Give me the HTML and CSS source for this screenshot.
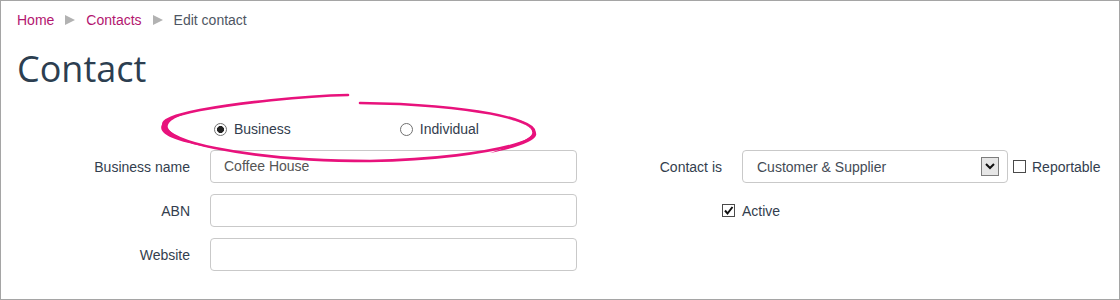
FILE: index.html
```html
<!DOCTYPE html>
<html lang="en">
<head>
<meta charset="utf-8">
<title>Edit contact</title>
<link rel="stylesheet" href="styles.css">
</head>
<body>
<div class="page">
  <nav class="crumbs">
    <a href="#" class="crumb-link">Home</a>
    <svg class="crumb-sep" width="10" height="10" viewBox="0 0 10 10"><path d="M0 0 L10 5 L0 10 Z"/></svg>
    <a href="#" class="crumb-link">Contacts</a>
    <svg class="crumb-sep" width="10" height="10" viewBox="0 0 10 10"><path d="M0 0 L10 5 L0 10 Z"/></svg>
    <span class="crumb-current">Edit contact</span>
  </nav>

  <h1 class="title">Contact</h1>

  <form class="form">
    <div class="radios">
      <label class="radio-opt"><input type="radio" name="kind" class="radio" checked> Business</label>
      <label class="radio-opt"><input type="radio" name="kind" class="radio"> Individual</label>
    </div>

    <label class="field-label">Business name</label>
    <div class="input">Coffee House</div>
    <label class="field-label">Contact is</label>
    <div class="select-wrap">
      <div class="select">
        <span class="select-text">Customer &amp; Supplier</span>
        <span class="select-btn">
          <svg width="10" height="7" viewBox="0 0 10 7"><path d="M1 1 L5 5 L9 1" fill="none" stroke="#111" stroke-width="2"/></svg>
        </span>
      </div>
      <label class="check-opt"><span class="check"></span>Reportable</label>
    </div>

    <label class="field-label">ABN</label>
    <div class="input"></div>
    <label class="check-opt active-opt"><span class="check">
      <svg width="11" height="11" viewBox="0 0 11 11"><path d="M2 5.5 L4.5 8.5 L9.5 2" fill="none" stroke="#111" stroke-width="2"/></svg>
    </span>Active</label>

    <label class="field-label">Website</label>
    <div class="input"></div>
  </form>

  <svg class="annotation" width="1120" height="300" viewBox="0 0 1120 300">
    <path class="ring" d="M 348 95 C 300 96, 240 103, 200 110 C 175 115, 160 120, 164 126 C 168 134, 185 142, 215 148 C 260 157, 320 161, 370 161 C 430 160, 490 153, 520 143 C 540 136, 538 128, 522 122 C 500 113, 450 107, 400 104 L 360 103"/>
    <path class="ring-fill" d="M 200 110 C 168 115, 155 124, 164 133 C 172 140, 192 144, 212 148 C 190 142, 172 136, 168 128 C 166 121, 178 115, 200 110 Z"/>
    <path class="ring-fill" d="M 505 118 C 535 126, 545 134, 528 142 C 518 147, 505 150, 490 153 C 510 146, 530 140, 532 134 C 534 128, 525 123, 505 118 Z"/>
  </svg>
</div>
</body>
</html>
```

FILE: styles.css
```css
html, body {
  margin: 0;
  padding: 0;
  background: #ffffff;
}

body {
  font-family: "Liberation Sans", Arial, sans-serif;
  font-size: 14px;
  color: #333e4e;
}

.page {
  position: relative;
  box-sizing: border-box;
  width: 1120px;
  height: 300px;
  border: 1px solid #a5a5a5;
  padding: 9px 16px 0 16px;
  overflow: hidden;
}

.crumbs {
  display: flex;
  align-items: center;
  height: 20px;
  line-height: 20px;
}

.crumb-link {
  color: #b3166f;
  text-decoration: none;
}

.crumb-sep {
  fill: #b2b2b2;
  margin: 0 11px;
}

.crumb-current {
  color: #4e5663;
}

.title {
  margin: 19px 0 30px 0;
  font-family: "Open Sans", "Noto Sans", sans-serif;
  font-weight: 400;
  font-size: 36px;
  line-height: 40px;
  color: #2c3e50;
}

.form {
  display: grid;
  grid-template-columns: 173px 367px 125px auto;
  column-gap: 20px;
  row-gap: 11px;
  align-items: center;
}

.radios {
  grid-column: 2 / span 3;
  display: flex;
  align-items: center;
  gap: 109px;
  height: 20px;
  padding-left: 4px;
}

.radio-opt {
  display: flex;
  align-items: center;
  gap: 7px;
  color: #333d4d;
}

.radio {
  appearance: none;
  -webkit-appearance: none;
  box-sizing: border-box;
  width: 13px;
  height: 13px;
  margin: 0;
  border: 1px solid #707070;
  border-radius: 50%;
  background: #ffffff;
}

.radio:checked {
  background: radial-gradient(circle, #222222 0 3.2px, #ffffff 3.8px);
}

.field-label {
  text-align: right;
  color: #333e4e;
}

.input {
  box-sizing: border-box;
  height: 33px;
  border: 1px solid #c9c9c9;
  border-radius: 4px;
  padding: 0 13px;
  line-height: 31px;
  color: #555555;
}

.select-wrap {
  display: flex;
  align-items: center;
  gap: 5px;
}

.select {
  box-sizing: border-box;
  width: 266px;
  height: 33px;
  border: 1px solid #c9c9c9;
  border-radius: 4px;
  padding: 0 8px 0 14px;
  display: flex;
  align-items: center;
  justify-content: space-between;
  color: #444b55;
}

.select-btn {
  box-sizing: border-box;
  width: 18px;
  height: 19px;
  border: 1px solid #7d7d7d;
  background: #e6e6e6;
  display: flex;
  align-items: center;
  justify-content: center;
}

.check-opt {
  display: flex;
  align-items: center;
  gap: 6px;
  color: #333e4e;
}

.check {
  box-sizing: border-box;
  width: 13px;
  height: 13px;
  border: 1px solid #4a4a4a;
  background: #ffffff;
  display: flex;
  align-items: center;
  justify-content: center;
}

.active-opt {
  grid-column: 4;
  margin-left: -20px;
  gap: 7px;
}

.annotation {
  position: absolute;
  left: -1px;
  top: -1px;
  pointer-events: none;
}

.ring {
  fill: none;
  stroke: #e8127c;
  stroke-width: 2.6;
  stroke-linecap: round;
}

.ring-fill {
  fill: #e8127c;
}
```
